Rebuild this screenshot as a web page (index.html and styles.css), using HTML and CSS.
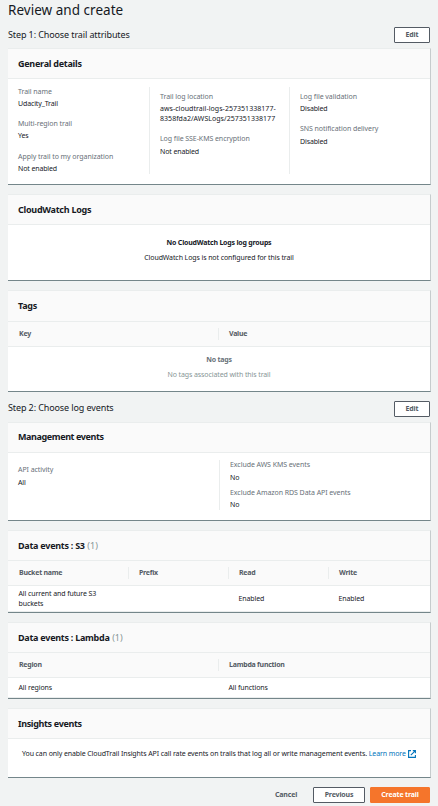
FILE: index.html
```html
<!DOCTYPE html>
<html lang="en">
<head>
<meta charset="utf-8">
<title>Review and create</title>
<link rel="stylesheet" href="styles.css">
</head>
<body>
<main class="page">
  <h1 class="title">Review and create</h1>

  <div class="step step-one"><h2>Step 1: Choose trail attributes</h2><button class="btn edit">Edit</button></div>

  <section class="panel general">
    <h3 class="panel-head">General details</h3>
    <div class="columns three">
      <dl class="col">
        <dt>Trail name</dt><dd>Udacity_Trail</dd>
        <dt>Multi-region trail</dt><dd class="yes">Yes</dd>
        <dt>Apply trail to my organization</dt><dd>Not enabled</dd>
      </dl>
      <dl class="col inset">
        <dt>Trail log location</dt><dd class="wide">aws-cloudtrail-logs-257351338177-<br>8358fda2/AWSLogs/257351338177</dd>
        <dt>Log file SSE-KMS encryption</dt><dd class="low">Not enabled</dd>
      </dl>
      <dl class="col inset">
        <dt>Log file validation</dt><dd>Disabled</dd>
        <dt>SNS notification delivery</dt><dd class="low">Disabled</dd>
      </dl>
    </div>
  </section>

  <section class="panel cloudwatch">
    <h3 class="panel-head">CloudWatch Logs</h3>
    <div class="empty">
      <strong>No CloudWatch Logs log groups</strong>
      <p>CloudWatch Logs is not configured for this trail</p>
    </div>
  </section>

  <section class="panel tags">
    <h3 class="panel-head">Tags</h3>
    <div class="row thead halves"><span>Key</span><span>Value</span></div>
    <div class="empty muted">
      <strong>No tags</strong>
      <p>No tags associated with this trail</p>
    </div>
  </section>

  <div class="step step-two"><h2>Step 2: Choose log events</h2><button class="btn edit">Edit</button></div>

  <section class="panel management">
    <h3 class="panel-head">Management events</h3>
    <div class="columns two">
      <dl class="col inset"><dt>API activity</dt><dd class="low">All</dd></dl>
      <dl class="col">
        <dt>Exclude AWS KMS events</dt><dd class="low">No</dd>
        <dt>Exclude Amazon RDS Data API events</dt><dd>No</dd>
      </dl>
    </div>
  </section>

  <section class="panel s3">
    <h3 class="panel-head">Data events : S3 <span class="count">(1)</span></h3>
    <div class="row thead quarters"><span>Bucket name</span><span>Prefix</span><span>Read</span><span>Write</span></div>
    <div class="row tbody quarters"><span>All current and future S3<br>buckets</span><span></span><span>Enabled</span><span>Enabled</span></div>
  </section>

  <section class="panel lambda">
    <h3 class="panel-head">Data events : Lambda <span class="count">(1)</span></h3>
    <div class="row thead halves"><span>Region</span><span>Lambda function</span></div>
    <div class="row tbody halves"><span>All regions</span><span>All functions</span></div>
  </section>

  <section class="panel insights">
    <h3 class="panel-head">Insights events</h3>
    <p class="notice">You can only enable CloudTrail Insights API call rate events on trails that log all or write management events. <a class="link">Learn more<svg class="external" viewBox="0 0 8 8"><path d="M3 .6H.6v6.8h6.8V5M4.8.6h2.6v2.6M7.2.8 2.8 5.2"/></svg></a></p>
  </section>

  <footer class="actions">
    <button class="btn cancel">Cancel</button>
    <button class="btn previous">Previous</button>
    <button class="btn create">Create trail</button>
  </footer>
</main>
</body>
</html>
```
FILE: styles.css
```css
* { box-sizing: border-box; margin: 0; padding: 0; }

body {
  background: #f1f3f3;
  color: #16191f;
  font: 7px/10px "Noto Sans", "Open Sans", sans-serif;
  letter-spacing: -0.1px;
  overflow: hidden;
}

.page { width: 438px; height: 806px; padding: 0 7px 0 8px; }

.title { height: 27px; padding-top: 1px; font-size: 13.5px; line-height: 19px; font-weight: 400; letter-spacing: 0.03px; white-space: nowrap; }

.step { display: flex; align-items: center; justify-content: space-between; height: 16px; padding-right: 1px; }
.step h2 { font-size: 9px; line-height: 14px; font-weight: 400; letter-spacing: -0.11px; white-space: nowrap; }
.step-one { margin-bottom: 5px; }
.step-two { margin: 9px 0 5px; }
.step-two h2 { margin-top: -2px; }

.btn {
  height: 16px;
  border: 1px solid #545b64;
  border-radius: 1px;
  background: #fff;
  color: #545b64;
  font: 700 7px/12px "Noto Sans", sans-serif;
  letter-spacing: -0.15px;
  text-align: center;
  white-space: nowrap;
}
.edit { width: 36px; }

.panel {
  display: flex;
  flex-direction: column;
  margin-bottom: 9px;
  background: #fff;
  border-top: 1px solid #eaeded;
  border-right: 1px solid #c6cccd;
  border-bottom: 1px solid #74868a;
}
.general { height: 137px; }
.cloudwatch { height: 87px; }
.tags { height: 102px; }
.management { height: 99px; }
.s3 { height: 83px; }
.lambda { height: 77px; }
.insights { height: 70px; }

.panel-head {
  flex: none;
  height: 30px;
  padding: 0 10px;
  background: #fafafa;
  border-bottom: 1px solid #eaeded;
  font-size: 9px;
  line-height: 29px;
  font-weight: 700;
  letter-spacing: -0.26px;
  white-space: nowrap;
}
.tags .panel-head { height: 31px; }
.management .panel-head { line-height: 27px; letter-spacing: -0.4px; }
.insights .panel-head { letter-spacing: -0.34px; }
.count { margin-left: 0.5px; color: #879596; font-weight: 400; letter-spacing: 0; }

.columns { display: grid; grid-template-rows: 100%; white-space: nowrap; }
.three { grid-template-columns: 141px 140px 1fr; height: 87px; margin-top: 8px; }
.two { grid-template-columns: 211px 1fr; height: 50px; margin-top: 7px; }
.col { padding-left: 10px; }
.col + .col { border-left: 1px solid #eaeded; }
.three .inset, .two .inset { padding-top: 5px; }
dt { color: #687078; letter-spacing: -0.06px; }
dd { margin: 2px 0 10px; letter-spacing: -0.13px; }
dd.wide { letter-spacing: 0.04px; }
dd.low { margin: 3px 0 9px; }
dd.yes { margin-bottom: 11px; }
.two dd.low { margin-bottom: 5px; }

.empty { padding-top: 13px; text-align: center; }
.empty strong { display: block; margin-bottom: 5px; letter-spacing: -0.2px; }
.muted { padding-top: 8px; color: #879596; }
.muted strong { color: #687078; }

.row { display: grid; flex: none; white-space: nowrap; }
.halves { grid-template-columns: 210px 1fr; }
.quarters { grid-template-columns: 120px 100px 100px 1fr; }
.thead { height: 25px; align-items: center; background: #fafafa; border-bottom: 1px solid #eaeded; color: #545b64; font-weight: 700; letter-spacing: -0.24px; }
.thead span { height: 12px; line-height: 11px; padding-left: 11px; }
.thead span + span { border-left: 1px solid #eaeded; padding-left: 10px; }
.tbody { flex: 1; align-items: center; border-bottom: 1px solid #eaeded; }
.tbody span { padding-left: 10.5px; }

.notice { padding: 10px 0 0 14px; white-space: nowrap; }
.link { color: #0073bb; }
.external { width: 8px; height: 8px; margin-left: 2px; vertical-align: -2px; fill: none; stroke: currentColor; stroke-width: 1.1; }

.actions { display: flex; justify-content: flex-end; padding-right: 1px; }
.cancel { width: 50px; border-color: transparent; background: transparent; }
.previous { width: 52px; margin: 0 5px 0 2px; }
.create { width: 60px; border-color: #f5752b; background: #f5752b; color: #fff; }
```
